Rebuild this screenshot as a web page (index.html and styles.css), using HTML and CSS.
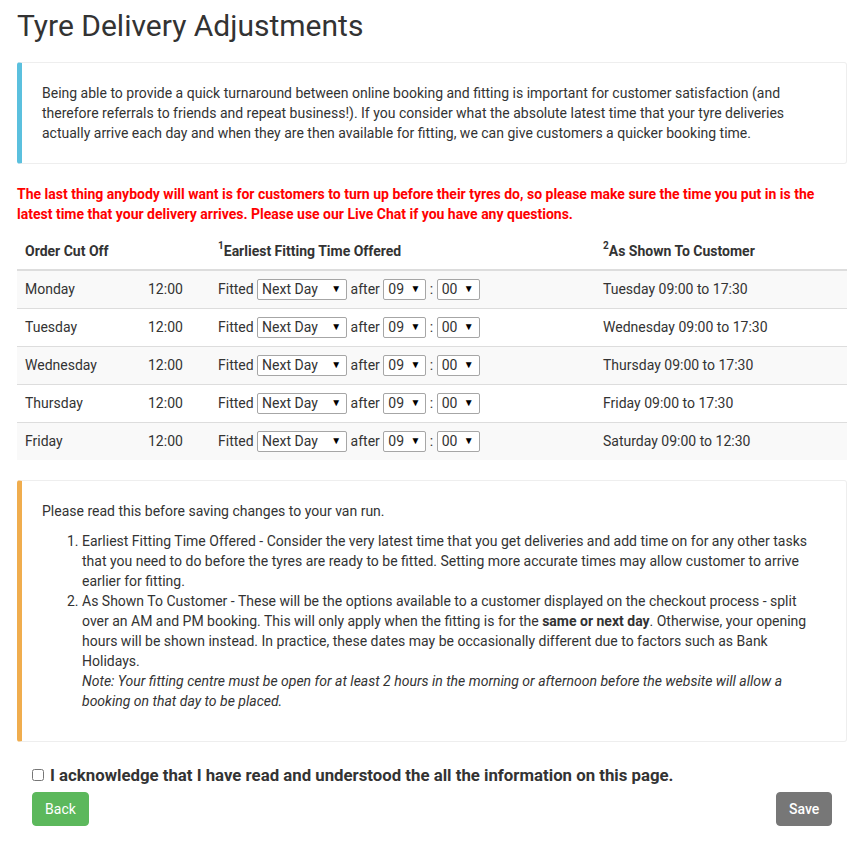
FILE: index.html
```html
<!DOCTYPE html>
<html lang="en">
<head>
<meta charset="utf-8">
<title>Tyre Delivery Adjustments</title>
<link rel="stylesheet" href="styles.css">
</head>
<body>
<div class="container">
  <h1 class="title">Tyre Delivery Adjustments</h1>

  <div class="callout callout-info">
    <p>Being able to provide a quick turnaround between online booking and fitting is important for customer satisfaction (and therefore referrals to friends and repeat business!). If you consider what the absolute latest time that your tyre deliveries actually arrive each day and when they are then available for fitting, we can give customers a quicker booking time.</p>
  </div>

  <p class="warning-text">The last thing anybody will want is for customers to turn up before their tyres do, so please make sure the time you put in is the latest time that your delivery arrives. Please use our Live Chat if you have any questions.</p>

  <table class="schedule">
    <colgroup>
      <col class="c1"><col class="c2"><col class="c3"><col class="c4">
    </colgroup>
    <thead>
      <tr>
        <th>Order Cut Off</th>
        <th></th>
        <th><sup>1</sup>Earliest Fitting Time Offered</th>
        <th><sup>2</sup>As Shown To Customer</th>
      </tr>
    </thead>
    <tbody>
      <tr>
        <td>Monday</td><td>12:00</td>
        <td><div class="fit">Fitted <span class="sel sel-day"><select><option>Next Day</option></select></span> after <span class="sel sel-num"><select><option>09</option></select></span> : <span class="sel sel-num"><select><option>00</option></select></span></div></td>
        <td>Tuesday 09:00 to 17:30</td>
      </tr>
      <tr>
        <td>Tuesday</td><td>12:00</td>
        <td><div class="fit">Fitted <span class="sel sel-day"><select><option>Next Day</option></select></span> after <span class="sel sel-num"><select><option>09</option></select></span> : <span class="sel sel-num"><select><option>00</option></select></span></div></td>
        <td>Wednesday 09:00 to 17:30</td>
      </tr>
      <tr>
        <td>Wednesday</td><td>12:00</td>
        <td><div class="fit">Fitted <span class="sel sel-day"><select><option>Next Day</option></select></span> after <span class="sel sel-num"><select><option>09</option></select></span> : <span class="sel sel-num"><select><option>00</option></select></span></div></td>
        <td>Thursday 09:00 to 17:30</td>
      </tr>
      <tr>
        <td>Thursday</td><td>12:00</td>
        <td><div class="fit">Fitted <span class="sel sel-day"><select><option>Next Day</option></select></span> after <span class="sel sel-num"><select><option>09</option></select></span> : <span class="sel sel-num"><select><option>00</option></select></span></div></td>
        <td>Friday 09:00 to 17:30</td>
      </tr>
      <tr>
        <td>Friday</td><td>12:00</td>
        <td><div class="fit">Fitted <span class="sel sel-day"><select><option>Next Day</option></select></span> after <span class="sel sel-num"><select><option>09</option></select></span> : <span class="sel sel-num"><select><option>00</option></select></span></div></td>
        <td>Saturday 09:00 to 12:30</td>
      </tr>
    </tbody>
  </table>

  <div class="callout callout-warning">
    <p>Please read this before saving changes to your van run.</p>
    <ol>
      <li>Earliest Fitting Time Offered - Consider the very latest time that you get deliveries and add time on for any other tasks that you need to do before the tyres are ready to be fitted. Setting more accurate times may allow customer to arrive earlier for fitting.</li>
      <li>As Shown To Customer - These will be the options available to a customer displayed on the checkout process - split over an AM and PM booking. This will only apply when the fitting is for the <strong>same or next day</strong>. Otherwise, your opening hours will be shown instead. In practice, these dates may be occasionally different due to factors such as Bank Holidays.<br><em>Note: Your fitting centre must be open for at least 2 hours in the morning or afternoon before the website will allow a booking on that day to be placed.</em></li>
    </ol>
  </div>

  <div class="footer-row">
    <label class="ack"><input type="checkbox" class="ack-box"> I acknowledge that I have read and understood the all the information on this page.</label>
    <div class="buttons">
      <button type="button" class="btn btn-back">Back</button>
      <button type="button" class="btn btn-save">Save</button>
    </div>
  </div>
</div>
</body>
</html>
```

FILE: styles.css
```css
* { box-sizing: border-box; }

html, body {
  margin: 0;
  padding: 0;
  background: #fff;
}

body {
  font-family: Roboto, "Liberation Sans", Arial, sans-serif;
  font-size: 14px;
  line-height: 20px;
  color: #333;
}

.container {
  width: 830px;
  margin-left: 17px;
}

.title {
  font-size: 30px;
  font-weight: 400;
  line-height: 33px;
  margin: 9px 0 0;
  color: #333;
}

.callout {
  margin: 20px 0;
  padding: 20px;
  border: 1px solid #eee;
  border-left-width: 5px;
  border-radius: 3px;
}

.callout p { margin: 0; }

.callout-info { border-left-color: #5bc0de; }
.callout-warning { border-left-color: #f0ad4e; padding-bottom: 10px; }

.callout-warning p { margin-bottom: 10px; }

.callout-warning ol {
  margin: 0 0 20px;
  padding-left: 40px;
}

.warning-text {
  color: #ff0000;
  font-weight: 700;
  margin: 0 0 9px;
}

.schedule {
  width: 100%;
  border-collapse: collapse;
  border-spacing: 0;
  table-layout: fixed;
  margin-bottom: 20px;
}

.schedule col.c1 { width: 123px; }
.schedule col.c2 { width: 70px; }
.schedule col.c3 { width: 385px; }
.schedule col.c4 { width: 252px; }

.schedule th {
  text-align: left;
  font-weight: 700;
  padding: 8px;
  line-height: 20px;
  border-bottom: 2px solid #ddd;
  vertical-align: bottom;
}

.schedule sup {
  font-size: 10px;
  line-height: 0;
  position: relative;
  top: -1px;
}

.schedule td {
  padding: 8px;
  line-height: 21px;
  border-top: 1px solid #ddd;
  vertical-align: middle;
  white-space: nowrap;
}

.schedule tbody tr:first-child td { border-top: 0; }

.schedule tbody tr:nth-child(odd) td { background: #f9f9f9; }

.fit {
  display: flex;
  align-items: center;
  height: 21px;
  white-space: pre;
}

.sel {
  display: block;
  position: relative;
  height: 21px;
  flex: none;
}

.sel select {
  -webkit-appearance: none;
  appearance: none;
  width: 100%;
  height: 21px;
  margin: 0;
  padding: 0 0 0 4px;
  border: 1px solid #a6a6a6;
  border-radius: 2px;
  background: #fff;
  font-family: Roboto, "Liberation Sans", Arial, sans-serif;
  font-size: 14px;
  line-height: 19px;
  color: #333;
  display: block;
}

.sel::after {
  content: "\25BC";
  position: absolute;
  right: 6px;
  top: 5px;
  font-size: 10px;
  line-height: 10px;
  color: #000;
  pointer-events: none;
}

.sel-day { width: 90px; }
.sel-num { width: 43px; }

.footer-row {
  padding: 0 15px;
}

.ack {
  display: flex;
  align-items: center;
  gap: 6px;
  height: 26px;
  font-size: 16.8px;
  font-weight: 700;
  color: #333;
}

.ack-box {
  width: 12px;
  height: 12px;
  margin: 0;
}

.buttons {
  display: flex;
  justify-content: space-between;
  margin-top: 4px;
}

.btn {
  height: 34px;
  padding: 0 12px;
  border: 1px solid transparent;
  border-radius: 4px;
  font-family: Roboto, "Liberation Sans", Arial, sans-serif;
  font-size: 14px;
  line-height: 20px;
  color: #fff;
  cursor: pointer;
}

.btn-back {
  background: #5cb85c;
  border-color: #5cb85c;
  width: 57px;
}

.btn-save {
  background: #777;
  border-color: #777;
  width: 56px;
  font-weight: 500;
}
```
